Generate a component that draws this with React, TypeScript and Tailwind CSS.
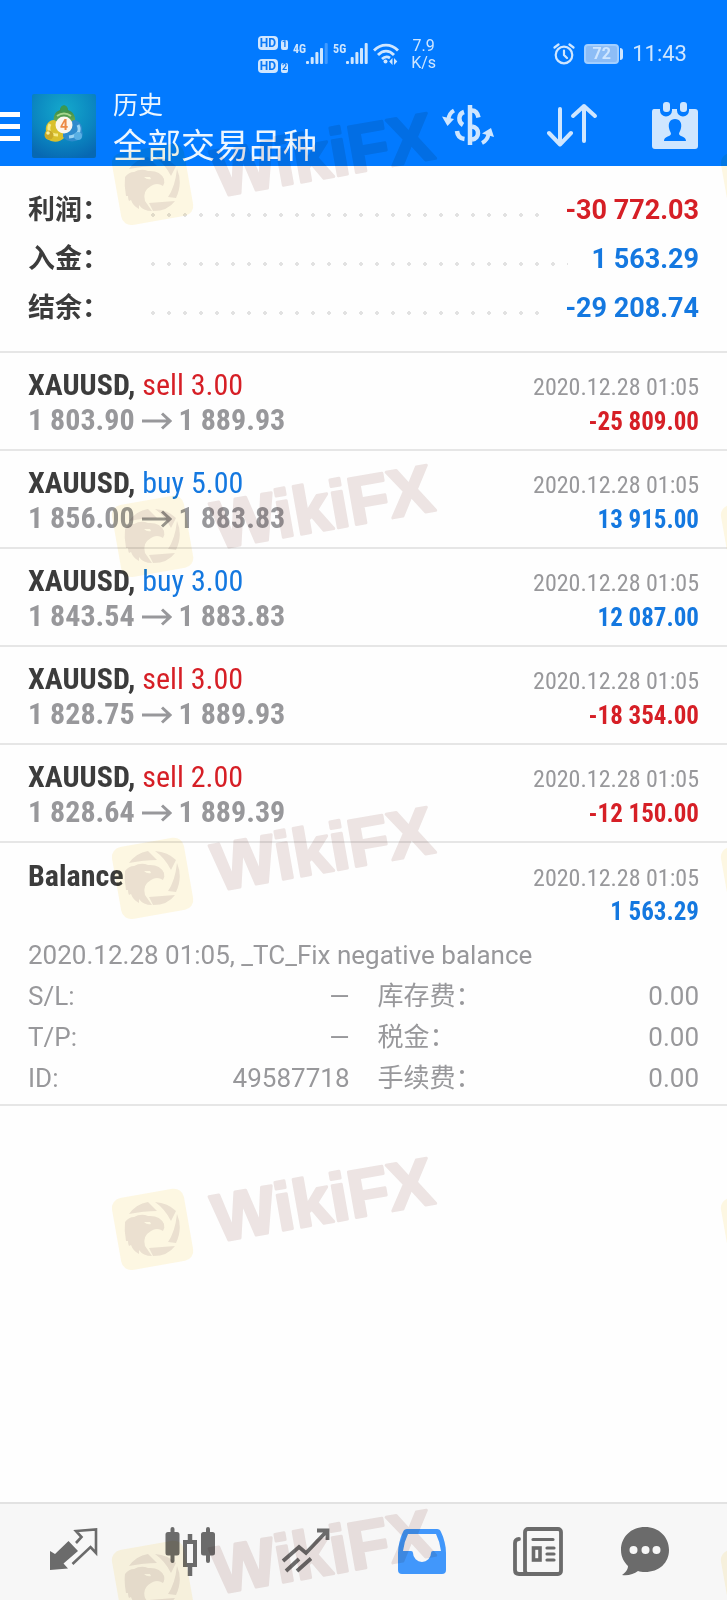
import type { ReactNode } from 'react';

type Deal = {
  symbol: string;
  side: 'buy' | 'sell';
  volume: string;
  open: string;
  close: string;
  time: string;
  profit: string;
};

const summary = [
  { label: '利润：', value: '-30 772.03', negative: true },
  { label: '入金：', value: '1 563.29', negative: false },
  { label: '结余：', value: '-29 208.74', negative: false },
];

const deals: Deal[] = [
  { symbol: 'XAUUSD', side: 'sell', volume: '3.00', open: '1 803.90', close: '1 889.93', time: '2020.12.28 01:05', profit: '-25 809.00' },
  { symbol: 'XAUUSD', side: 'buy', volume: '5.00', open: '1 856.00', close: '1 883.83', time: '2020.12.28 01:05', profit: '13 915.00' },
  { symbol: 'XAUUSD', side: 'buy', volume: '3.00', open: '1 843.54', close: '1 883.83', time: '2020.12.28 01:05', profit: '12 087.00' },
  { symbol: 'XAUUSD', side: 'sell', volume: '3.00', open: '1 828.75', close: '1 889.93', time: '2020.12.28 01:05', profit: '-18 354.00' },
  { symbol: 'XAUUSD', side: 'sell', volume: '2.00', open: '1 828.64', close: '1 889.39', time: '2020.12.28 01:05', profit: '-12 150.00' },
];

const details = [
  { label: 'S/L:', value: '—' },
  { label: '库存费：', value: '0.00' },
  { label: 'T/P:', value: '—' },
  { label: '税金：', value: '0.00' },
  { label: 'ID:', value: '49587718' },
  { label: '手续费：', value: '0.00' },
];

/* ---------- Status bar ---------- */

function HdBadge({ slot }: { slot: string }) {
  return (
    <span className="flex items-end gap-[3px]">
      <span className="flex h-[14px] w-5 items-center justify-center rounded-sm bg-[#cfe6ff] text-[12px] font-bold leading-none text-[#0a78f5]">
        HD
      </span>
      <span className="flex h-[10px] w-[7px] items-center justify-center rounded-xs bg-[#cfe6ff] text-[9px] font-bold leading-none text-[#0a78f5]">
        {slot}
      </span>
    </span>
  );
}

function Signal({ label, full }: { label: string; full: boolean }) {
  return (
    <span className="flex items-start">
      <span className="font-['Roboto_Condensed','Liberation_Sans_Narrow',Roboto,sans-serif] text-[12px] font-bold leading-none">
        {label}
      </span>
      <svg viewBox="0 0 22 22" className="h-[22px] w-[22px]" fill="currentColor" aria-hidden="true">
        <rect x="0" y="18" width="3" height="3" rx="1" />
        <rect x="4.7" y="14" width="3" height="7" rx="1" />
        <rect x="9.4" y="9" width="3" height="12" rx="1" />
        <rect x="14" y="5" width="3" height="16" rx="1" />
        <rect x="18.7" y="0" width="3" height="21" rx="1" opacity={full ? 1 : 0.3} />
      </svg>
    </span>
  );
}

function StatusBar() {
  return (
    <div className="flex h-[84px] items-center justify-between pt-6 pl-[258px] pr-10 text-[#cfe6ff]">
      <div className="flex items-center gap-[5px]">
        <div className="flex flex-col gap-[9px]">
          <HdBadge slot="1" />
          <HdBadge slot="2" />
        </div>
        <Signal label="4G" full={false} />
        <Signal label="5G" full />
        <svg viewBox="0 0 26 22" className="h-[22px] w-[26px]" fill="none" stroke="currentColor" strokeWidth="2.8" aria-hidden="true">
          <path d="M1 7.500C8 .300 18 .300 25 7.500M5 12C10 6.800 16 6.800 21 12M9 16c2.600-2.500 5-3 8-1" />
          <circle cx="12.500" cy="18.500" r="2" fill="currentColor" stroke="none" />
          <path d="m19.500 15-3.300 3.500 3.300 3.500zM21 15l3.300 3.500L21 22z" fill="currentColor" stroke="none" />
        </svg>
        <div className="pl-[7px] text-center text-[16px] leading-[17px]">
          <div>7.9</div>
          <div>K/s</div>
        </div>
      </div>

      <div className="flex items-center gap-[9px]">
        <svg viewBox="0 0 22 22" className="h-[22px] w-[22px]" fill="none" stroke="currentColor" strokeWidth="2.200" strokeLinecap="round" aria-label="Alarm">
          <circle cx="11" cy="12" r="8.300" />
          <path d="M11 7.500V12l3 3M1.500 4.500l4-3M20.500 4.500l-4-3" />
        </svg>
        <div className="flex items-center gap-px">
          <span className="flex h-5 w-[35px] items-center justify-center rounded-sm border-2 border-[#a3cfff] bg-[#8dbdf6] text-[16px] font-bold leading-none">
            72
          </span>
          <span className="h-3 w-[3px] rounded-r-sm bg-[#cfe6ff]" />
        </div>
        <time className="text-[22px] leading-6">11:43</time>
      </div>
    </div>
  );
}

/* ---------- App bar ---------- */

function AppLogo() {
  return (
    <svg viewBox="0 0 64 64" className="h-16 w-16" role="img" aria-label="MetaTrader 4">
      <defs>
        <radialGradient id="logoBg" cx="50%" cy="25%" r="80%">
          <stop offset="0" stopColor="#14a9cc" />
          <stop offset="0.600" stopColor="#0b86c0" />
          <stop offset="1" stopColor="#0768b2" />
        </radialGradient>
        <linearGradient id="logoGreen" x1="0" y1="0" x2="0" y2="1">
          <stop offset="0" stopColor="#2f8443" />
          <stop offset="1" stopColor="#7db85c" />
        </linearGradient>
      </defs>
      <rect width="64" height="64" rx="2" fill="url(#logoBg)" />
      <path d="M22 30c-1-7 0-12 6-14 1-6 7-6 8 0 6 2 8 7 7 14l-4 4H26z" fill="url(#logoGreen)" />
      <circle cx="32" cy="15" r="3.500" fill="#3b9950" />
      <path d="M25 22q7-5 14 0" fill="none" stroke="#a6d68c" strokeWidth="2" />
      <path d="M22 26c-6 0-9 6-8 11-2 3-1 8 3 9 5 3 12 2 16-3V32z" fill="#d9c02c" />
      <path d="M18 30c-3 6 0 11 8 11" fill="none" stroke="#f6ea86" strokeWidth="3" />
      <circle cx="17" cy="41" r="4.500" fill="#c9a927" />
      <circle cx="16" cy="39" r="1.800" fill="#f7ef9c" />
      <path d="M42 26c6 1 9 6 8 11 2 4 0 8-4 9-6 3-12 1-15-3V32z" fill="#2f8bcd" />
      <path d="M46 31c3 6 0 11-9 12" fill="none" stroke="#9ad4f4" strokeWidth="3" />
      <circle cx="46" cy="42" r="4" fill="#5ab0e4" />
      <circle cx="32" cy="31" r="8.500" fill="#fbf6ee" />
      <text x="32" y="36" textAnchor="middle" fontFamily="Roboto, sans-serif" fontSize="14" fontWeight="700" fill="#ec8a45">
        4
      </text>
    </svg>
  );
}

function AppBar() {
  return (
    <div className="flex h-[82px] items-start justify-between pr-7">
      <div className="flex min-w-0 items-start">
        <button type="button" aria-label="Menu" className="mt-7 flex w-5 flex-col gap-[7px]">
          <span className="h-[5px] bg-white" />
          <span className="h-[5px] bg-white" />
          <span className="h-[5px] bg-white" />
        </button>
        <div className="ml-3 mt-[10px]">
          <AppLogo />
        </div>
        <div className="ml-[17px] mt-[2px] whitespace-nowrap text-[#ecf6ff]">
          <p className="text-[25px] leading-10">历史</p>
          <h1 className="text-[34px] leading-10">全部交易品种</h1>
        </div>
      </div>

      <div className="flex items-center gap-[52px] pt-[18px] text-[#cfe6ff]">
        <button type="button" aria-label="Currency">
          <svg viewBox="0 0 54 48" className="h-12 w-[54px]" fill="none" stroke="currentColor" strokeWidth="4.500">
            <path d="M29 3v40" />
            <path d="M31 8.500c3.500 0 5.500 2 6.500 7M31 24.500c8 1 8 12 0 13" />
            <path d="M23 10c-6 2-6 10-1 13M16 29c.500 5 3.500 7.500 7.500 8" />
            <path d="M13 8.500C9.500 10.500 8 13 7.500 17" strokeWidth="4" />
            <path d="m1 14.500 12 2.500-6.500 7z" fill="currentColor" stroke="none" />
            <path d="M41 41c4-2 6-5 6.500-9" strokeWidth="4" />
            <path d="M41 31.500 50 26l3 9z" fill="currentColor" stroke="none" />
          </svg>
        </button>
        <button type="button" aria-label="Sort">
          <svg viewBox="0 0 52 48" className="h-12 w-[52px]" fill="none" stroke="currentColor" strokeWidth="4" strokeLinecap="round" strokeLinejoin="round">
            <path d="M13 7v35M2 31l11 11.500L24 31" />
            <path d="M37 39V4M26 14 37 4l11 10" />
          </svg>
        </button>
        <button type="button" aria-label="Period">
          <svg viewBox="0 0 48 48" className="h-12 w-12" fill="currentColor">
            <path
              fillRule="evenodd"
              d="M3 7h6v1.500a6 6 0 0 0 12 0V7h5v1.500a6 6 0 0 0 12 0V7h6q3 0 3 3v34q0 3-3 3H4q-3 0-3-3V10q0-3 2-3zM24 17c-5 0-7 4-6 9 .500 3 2 4 2 6-1 3-7 2-7 7h22c0-5-6-4-7-7 0-2 1.500-3 2-6 1-5-1-9-6-9z"
            />
            <rect x="12" y="0" width="7" height="10" rx="3" />
            <rect x="29" y="0" width="7" height="10" rx="3" />
          </svg>
        </button>
      </div>
    </div>
  );
}

/* ---------- Content ---------- */

function Summary() {
  return (
    <dl className="border-b-2 border-[#e6e6e6] px-7 pt-5 pb-[18px] font-bold">
      {summary.map((row) => (
        <div key={row.label} className="flex h-[49px] items-center">
          <dt className="w-[117px] shrink-0 text-[27px] text-[#3c3c3c]">{row.label}</dt>
          <span
            aria-hidden="true"
            className="mr-6 mt-2 h-1 flex-1 bg-[radial-gradient(circle,#e2e2e2_2px,transparent_2px)] bg-[length:16px_4px] bg-repeat-x"
          />
          <dd className={row.negative ? 'text-[27px] text-[#d61f26]' : 'text-[27px] text-[#1478e0]'}>
            {row.value}
          </dd>
        </div>
      ))}
    </dl>
  );
}

function DealRow({ deal }: { deal: Deal }) {
  return (
    <li className="border-b-2 border-[#e6e6e6] px-7 pt-[15px] pb-[11px] font-['Roboto_Condensed','Liberation_Sans_Narrow',Roboto,sans-serif]">
      <div className="flex h-[34px] items-baseline justify-between text-[30px] leading-[34px]">
        <p className="text-[#3c3c3c]">
          <span className="font-bold">{deal.symbol},</span>{' '}
          <span className={deal.side === 'sell' ? 'text-[#d61f26]' : 'text-[#1478e0]'}>
            {deal.side} {deal.volume}
          </span>
        </p>
        <time className="text-[24px] text-[#98989b]">{deal.time}</time>
      </div>
      <div className="flex h-9 items-baseline justify-between text-[30px] font-bold leading-9">
        <p className="text-[#98989b]">
          {deal.open}
          <svg viewBox="0 0 30 18" className="mx-[7px] inline-block h-[18px] w-[30px] align-baseline" fill="none" stroke="currentColor" strokeWidth="3" aria-hidden="true">
            <path d="M0 9h28M20 1.500 28 9l-8 7.500" />
          </svg>
          {deal.close}
        </p>
        <p className={deal.profit.startsWith('-') ? 'text-[25px] text-[#d61f26]' : 'text-[25px] text-[#1478e0]'}>
          {deal.profit}
        </p>
      </div>
    </li>
  );
}

function BalanceRow() {
  return (
    <li className="border-b-2 border-[#e6e6e6] px-7 pt-4 pb-[5px]">
      <div className="font-['Roboto_Condensed','Liberation_Sans_Narrow',Roboto,sans-serif]">
        <div className="flex h-[34px] items-baseline justify-between leading-[34px]">
          <p className="text-[30px] font-bold text-[#3c3c3c]">Balance</p>
          <time className="text-[24px] text-[#98989b]">2020.12.28 01:05</time>
        </div>
        <p className="pt-px text-right text-[25px] font-bold leading-9 text-[#1478e0]">1 563.29</p>
      </div>
      <div className="pt-[5px] text-[26px] leading-[41px] text-[#98989b]">
        <p>2020.12.28 01:05, _TC_Fix negative balance</p>
        <dl className="grid grid-cols-2 gap-x-7">
          {details.map((item) => (
            <div key={item.label} className="flex h-[41px] justify-between">
              <dt>{item.label}</dt>
              <dd>{item.value}</dd>
            </div>
          ))}
        </dl>
      </div>
    </li>
  );
}

/* ---------- Bottom navigation ---------- */

const tabs: { name: string; active?: boolean; icon: ReactNode }[] = [
  {
    name: 'Quotes',
    icon: (
      <>
        <path d="M1 24v19l18-1.500-4.500-5L29 24 19.500 14 6 27z" fill="currentColor" />
        <path d="m23.500 37 18-17 5.500 6V2.500L27 4l5.500 6-5.500 6" fill="none" stroke="currentColor" strokeWidth="2.600" />
      </>
    ),
  },
  {
    name: 'Charts',
    icon: (
      <>
        <path d="M7.500 0q2 0 2 2v3H12q2.500 0 2.500 2.500V26q0 2.500-2.500 2.500H9.500V34q0 2-2 2t-2-2v-5.500H3Q.500 28.500.500 26V7.500Q.500 5 3 5h2.500V2q0-2 2-2z" fill="currentColor" />
        <path d="M43 0q2 0 2 2v3h2.500Q50 5 50 7.500V26q0 2.500-2.500 2.500H45V34q0 2-2 2t-2-2v-5.500h-2.500Q36 28.500 36 26V7.500Q36 5 38.500 5H41V2q0-2 2-2z" fill="currentColor" />
        <path d="M25 7v7m0 25v10" fill="none" stroke="currentColor" strokeWidth="4.500" />
        <rect x="20" y="15" width="10" height="23" fill="none" stroke="currentColor" strokeWidth="4" />
      </>
    ),
  },
  {
    name: 'Trade',
    icon: (
      <path
        d="m2 34 16-14 7 6L46 4M36 3.500h10.500V13M5 44l13-12M16 44l14-12.500"
        fill="none"
        stroke="currentColor"
        strokeWidth="3.800"
      />
    ),
  },
  {
    name: 'History',
    active: true,
    icon: (
      <path
        fillRule="evenodd"
        d="M10 2h30q3 0 4 3c3 6 5 14 5 21v17q0 4-4 4H5q-4 0-4-4V26C1 19 3 11 6 5q1-3 4-3zm1 5q-4 8-5 17h8q2 0 2 2a9 9 0 0 0 18 0q0-2 2-2h8q-1-9-5-17z"
        fill="currentColor"
      />
    ),
  },
  {
    name: 'News',
    icon: (
      <g fill="none" stroke="currentColor" strokeWidth="3.800" strokeLinecap="round">
        <rect x="12" y="2" width="36" height="45" rx="3" />
        <path d="M6 12q-4 0-4 4v27q0 4 4 4h10" />
        <path d="M20 12.500h20M34 21h7M34 27h7M34 33h7" strokeWidth="3.200" />
        <rect x="20.500" y="21" width="6.500" height="12" strokeWidth="3.600" />
      </g>
    ),
  },
  {
    name: 'Messages',
    icon: (
      <path
        fillRule="evenodd"
        d="M25 0C11 0 1 10 1 23c0 7 3 12 7 16 0 4-3 7-6 9 6 1 12-1 16-4 2 .700 4 1 7 1 14 0 24-9 24-22S39 0 25 0zM13.500 19a4 4 0 1 1 0 8 4 4 0 0 1 0-8zm12 0a4 4 0 1 1 0 8 4 4 0 0 1 0-8zm11 0a4 4 0 1 1 0 8 4 4 0 0 1 0-8z"
        fill="currentColor"
      />
    ),
  },
];

function BottomNav() {
  return (
    <nav className="grid h-[98px] grid-cols-[repeat(5,7fr)_6fr] items-center border-t-2 border-[#e2e2e2] bg-[#f7f7f7] pl-4 pr-8">
      {tabs.map((tab) => (
        <a
          key={tab.name}
          href={`#${tab.name.toLowerCase()}`}
          aria-label={tab.name}
          aria-current={tab.active ? 'page' : undefined}
          className={tab.active ? 'flex justify-center text-[#4197fb]' : 'flex justify-center text-[#6b6b6b]'}
        >
          <svg viewBox="0 0 50 50" className="h-[50px] w-[50px]" aria-hidden="true">
            {tab.icon}
          </svg>
        </a>
      ))}
    </nav>
  );
}

/* ---------- Watermark ---------- */

const stamps = [95, 447, 789, 1140, 1492];

function Eagle() {
  return (
    <>
      <rect x="16" y="53" width="73" height="73" rx="10" fill="#fbd75b" opacity="0.170" transform="rotate(-10 52 89)" />
      <g opacity="0.120" fill="#6a4350">
        <path d="M29 74Q36 64 48 62L57 71Q44 71 29 74z" />
        <path d="M55 62Q68 63 76 71L71 81Q65 69 55 62z" />
        <path d="M77 74Q83 88 76 103L68 102Q75 92 77 74z" />
        <path d="M49 108L75 106Q68 116 53 116z" />
        <path
          fillRule="evenodd"
          d="M25 82q4-5 9-5 7-4 14-1 12-1 16 8 1 4-1 7-6-4-12 0-9 5-6 15l7 10q-9 0-13-6v4q-6-3-8-9l-2 1q-1-2-1-5l-2 0q-2-10-1-19zM44 82q3 3 7 2l-1-2z"
        />
      </g>
    </>
  );
}

function Watermark() {
  return (
    <div aria-hidden="true" className="pointer-events-none absolute inset-0 overflow-hidden mix-blend-multiply">
      <svg className="h-full w-full">
        {stamps.map((y) => (
          <g key={y}>
            <g transform={`translate(100 ${y})`}>
              <Eagle />
              <text
                transform="translate(117 102) rotate(-10)"
                fontFamily="'Liberation Sans', Arial, sans-serif"
                fontSize="67"
                fontWeight="700"
                fill="#7a3c32"
                stroke="#7a3c32"
                strokeWidth="3"
                strokeLinejoin="round"
                opacity="0.130"
              >
                WikiFX
              </text>
            </g>
            <g transform={`translate(709 ${y})`}>
              <Eagle />
            </g>
          </g>
        ))}
      </svg>
    </div>
  );
}

export default function App() {
  return (
    <div lang="zh-CN" className="relative flex min-h-screen flex-col bg-[#fefefe] font-[Roboto,'Noto_Sans_CJK_SC',sans-serif]">
      <header className="bg-[#027aff]">
        <StatusBar />
        <AppBar />
      </header>
      <main className="flex-1">
        <Summary />
        <ul>
          {deals.map((deal) => (
            <DealRow key={`${deal.side}-${deal.open}`} deal={deal} />
          ))}
          <BalanceRow />
        </ul>
      </main>
      <BottomNav />
      <Watermark />
    </div>
  );
}
